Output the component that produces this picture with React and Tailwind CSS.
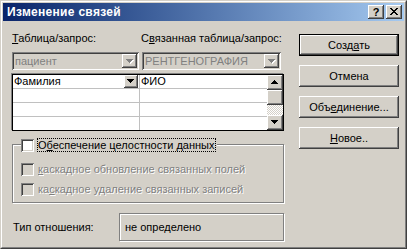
import React from 'react';

const raised =
  'shadow-[inset_-1px_-1px_#404040,inset_1px_1px_#ffffff,inset_-2px_-2px_#808080,inset_2px_2px_#d4d0c8]';
const sunken =
  'shadow-[inset_1px_1px_#808080,inset_-1px_-1px_#ffffff,inset_2px_2px_#404040,inset_-2px_-2px_#d4d0c8]';
const etched = 'border border-[#808080] shadow-[inset_1px_1px_#ffffff,1px_1px_#ffffff]';
const grayText = 'text-[#808080] [text-shadow:1px_1px_0_#ffffff]';

const Arrow = ({ up = false, disabled = false }) => {
  const rows = up ? [3, 2, 1, 0] : [0, 1, 2, 3];
  const tri = (dx, dy, fill) =>
    rows.map((r, i) => (
      <rect key={`${fill}${i}`} x={r + dx} y={i + dy} width={7 - r * 2} height={1} fill={fill} />
    ));
  return (
    <svg width="8" height="5" viewBox="0 0 8 5" shapeRendering="crispEdges">
      {disabled && tri(1, 1, '#ffffff')}
      {tri(0, 0, disabled ? '#808080' : '#000000')}
    </svg>
  );
};

const CloseGlyph = () => (
  <svg width="8" height="7" viewBox="0 0 8 7" shapeRendering="crispEdges">
    <path
      fill="#000"
      d="M0 0h2v1H0zM6 0h2v1H6zM1 1h2v1H1zM5 1h2v1H5zM2 2h4v1H2zM3 3h2v1H3zM2 4h4v1H2zM1 5h2v1H1zM5 5h2v1H5zM0 6h2v1H0zM6 6h2v1H6z"
    />
  </svg>
);

const TitleBar = () => (
  <div className="h-[18px] flex items-center pl-[4px] pr-[2px] bg-linear-to-r from-[#0a246a] to-[#a6caf0]">
    <span className="text-white font-bold text-[12px] leading-[18px] tracking-[0.3px]">Изменение связей</span>
    <div className="ml-auto flex gap-[2px]">
      <div className={`w-[16px] h-[14px] bg-[#d4d0c8] ${raised} flex items-center justify-center`}>
        <span className="font-bold text-[11px] leading-none">?</span>
      </div>
      <div className={`w-[16px] h-[14px] bg-[#d4d0c8] ${raised} flex items-center justify-center pb-px`}>
        <CloseGlyph />
      </div>
    </div>
  </div>
);

const Combo = ({ width, text }) => (
  <div className={`${width} h-[18px] bg-[#d4d0c8] ${sunken} flex p-[2px]`}>
    <span className="flex-1 pl-[1px] leading-[14px] text-[#808080] overflow-hidden whitespace-nowrap">{text}</span>
    <div className={`w-[15px] h-[14px] bg-[#d4d0c8] ${raised} flex items-center justify-center`}>
      <Arrow disabled />
    </div>
  </div>
);

const ScrollBtn = ({ up }) => (
  <div className={`h-[15px] bg-[#d4d0c8] ${raised} flex items-center justify-center`}>
    <Arrow up={up} />
  </div>
);

const Grid = () => {
  const rows = [
    ['Фамилия', 'ФИО'],
    ['', ''],
    ['', ''],
    ['', ''],
  ];
  return (
    <div className="mt-[4px] h-[57px] bg-white border border-black shadow-[-1px_-1px_0_#808080] flex">
      <div className="flex-1 flex flex-col">
        {rows.map((r, i) => (
          <div
            key={i}
            className={`flex ${i < 3 ? 'h-[14px] border-b border-[#c0c0c0]' : 'h-[13px]'}`}
          >
            <div className="w-[127px] border-r border-[#c0c0c0] flex">
              <span className="flex-1 pl-px leading-[13px]">{r[0]}</span>
              {i === 0 && (
                <div className={`w-[14px] h-[13px] mr-px bg-[#d4d0c8] ${raised} flex items-center justify-center`}>
                  <Arrow />
                </div>
              )}
            </div>
            <span className="flex-1 pl-px leading-[13px]">{r[1]}</span>
          </div>
        ))}
      </div>
      <div className="w-[16px] flex flex-col">
        <ScrollBtn up />
        <div className={`h-[15px] bg-[#d4d0c8] ${raised}`} />
        <div className="h-[10px] bg-[repeating-conic-gradient(#ffffff_0%_25%,#d4d0c8_0%_50%)] bg-size-[2px_2px]" />
        <ScrollBtn />
      </div>
    </div>
  );
};

const CheckBox = ({ disabled }) => (
  <div className={`w-[13px] h-[13px] shrink-0 ${disabled ? 'bg-[#d4d0c8]' : 'bg-white'} ${sunken}`} />
);

const WinButton = ({ children, isDefault }) => {
  const inner = (
    <div className={`h-full bg-[#d4d0c8] ${raised} flex items-center justify-center`}>{children}</div>
  );
  return (
    <div className={`h-[22px] ${isDefault ? 'border border-black' : ''}`}>{inner}</div>
  );
};

const U = ({ children }) => (
  <span className="underline decoration-1 underline-offset-[1px]">{children}</span>
);

export default function App() {
  return (
    <div className="w-[407px] h-[249px] bg-[#d4d0c8] font-['Liberation_Sans',Arial,sans-serif] text-[11px] leading-[14px] text-black border border-t-[#d4d0c8] border-l-[#d4d0c8] border-r-[#404040] border-b-[#404040] select-none">
      <div className="h-full border border-t-white border-l-white border-r-[#808080] border-b-[#808080] p-px flex flex-col">
        <TitleBar />
        <div className="flex pl-[9px]">
          <div className="w-[272px] pt-[10px] flex flex-col">
            <div className="flex h-[14px]">
              <span className="w-[129px]">
                <U>Т</U>аблица/запрос:
              </span>
              <span>
                С<U>в</U>язанная таблица/запрос:
              </span>
            </div>
            <div className="mt-[7px] flex gap-[3px]">
              <Combo width="w-[127px]" text="пациент" />
              <Combo width="w-[139px]" text="РЕНТГЕНОГРАФИЯ" />
            </div>
            <Grid />

            <div className={`mt-[13px] h-[59px] ${etched} flex flex-col pl-[8px]`}>
              <div className="-mt-[7px] h-[14px] flex items-center self-start bg-[#d4d0c8] pr-[1px]">
                <CheckBox />
                <span className="ml-[3px] border border-dotted border-black h-[14px] leading-[12px] pr-px">
                  О<U>б</U>еспечение целостности данных
                </span>
              </div>
              <div className="mt-[10px] h-[14px] flex items-center">
                <CheckBox disabled />
                <span className={`ml-[4px] ${grayText}`}>
                  <U>к</U>аскадное обновление связанных полей
                </span>
              </div>
              <div className="mt-[6px] h-[14px] flex items-center">
                <CheckBox disabled />
                <span className={`ml-[4px] ${grayText}`}>
                  ка<U>с</U>кадное удаление связанных записей
                </span>
              </div>
            </div>

            <div className="mt-[10px] h-[28px] flex items-center">
              <span className="w-[107px] pl-px">Тип отношения:</span>
              <div className={`w-[165px] h-[28px] ${etched} flex items-center pl-[5px]`}>не определено</div>
            </div>
          </div>

          <div className="ml-[15px] w-[100px] pt-[13px] flex flex-col gap-[9px]">
            <WinButton isDefault>
              <span>
                Созд<U>а</U>ть
              </span>
            </WinButton>
            <WinButton>Отмена</WinButton>
            <WinButton>
              <span>
                Объ<U>е</U>динение...
              </span>
            </WinButton>
            <WinButton>
              <span>
                <U>Н</U>овое..
              </span>
            </WinButton>
          </div>
        </div>
      </div>
    </div>
  );
}
